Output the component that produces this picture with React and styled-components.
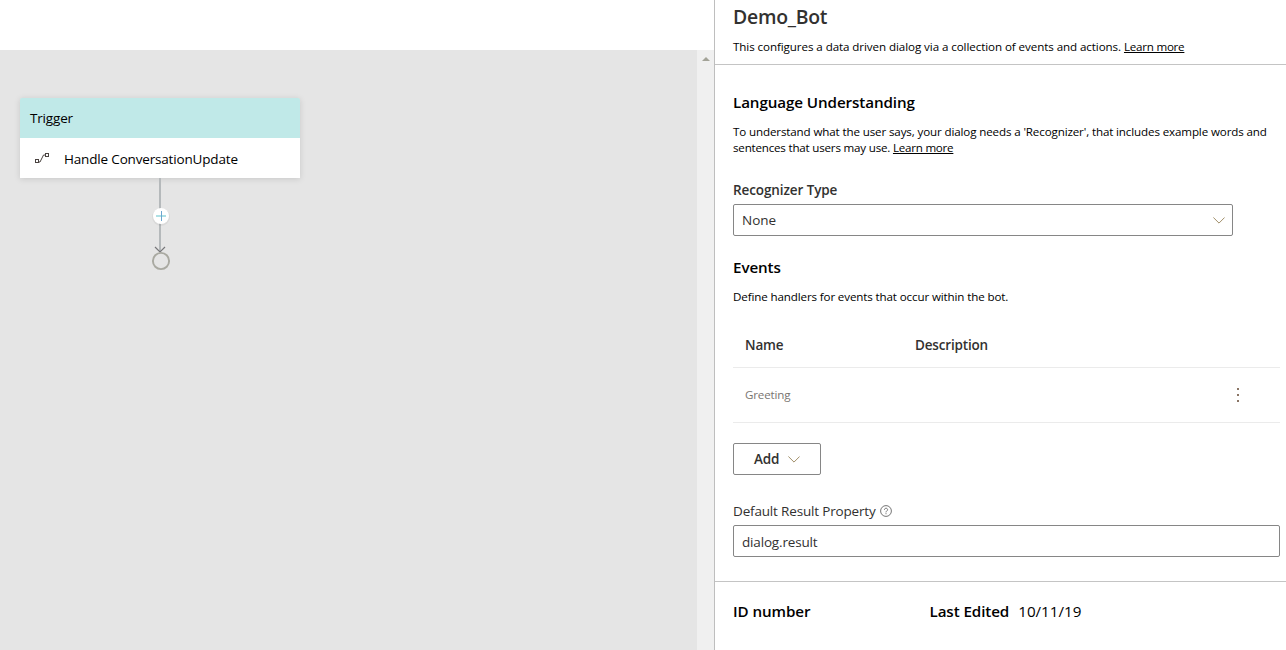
import React from "react";
import styled, { createGlobalStyle } from "styled-components";

const GlobalStyle = createGlobalStyle`
  *, *::before, *::after { box-sizing: border-box; }
  html, body { margin: 0; padding: 0; background: #fff; overflow: hidden; }
  body {
    font-family: "Segoe UI", "Open Sans", "Noto Sans", sans-serif;
    color: #000;
  }
  p, h1, h2 { margin: 0; }
`;

const Page = styled.div`
  display: flex;
  width: 1286px;
  height: 650px;
  overflow: hidden;
`;

const Editor = styled.main`
  display: flex;
  flex: none;
  flex-direction: column;
  width: 714px;
`;

const TopBar = styled.div`
  height: 50px;
  background: #fff;
`;

const CanvasRow = styled.div`
  display: flex;
  flex: 1;
`;

const Canvas = styled.div`
  flex: 1;
  padding: 48px 20px 0;
  background: #e5e5e5;
`;

const ScrollTrack = styled.div`
  display: flex;
  justify-content: center;
  width: 17px;
  padding-top: 7px;
  background: #f0f0f0;
`;

const Flow = styled.div`
  width: 280px;
`;

const TriggerCard = styled.div`
  border-radius: 2px 2px 0 0;
  overflow: hidden;
  box-shadow: 0 1px 6px rgba(0, 0, 0, 0.13);
`;

const CardRow = styled.div`
  display: flex;
  align-items: center;
  height: 40px;
  padding: ${(p) => (p.$head ? "0 10px" : "2px 14px 0")};
  gap: 14px;
  background: ${(p) => (p.$head ? "#c0e9e8" : "#fff")};
`;

const Text = styled.span`
  font-size: ${(p) => p.$size || 13.5}px;
  font-weight: ${(p) => p.$weight || 400};
  line-height: ${(p) => p.$line || 20}px;
  letter-spacing: ${(p) => p.$track || -0.17}px;
  color: ${(p) => p.$color || "#323130"};
  white-space: nowrap;
`;

const Panel = styled.aside`
  display: flex;
  flex-direction: column;
  flex: 1;
  min-width: 0;
  border-left: 1px solid #bebebe;
`;

const PanelHeader = styled.header`
  display: flex;
  flex-direction: column;
  height: 65px;
  padding-left: 18px;
  border-bottom: 1px solid #c4c4c4;
`;

const PanelBody = styled.div`
  display: flex;
  flex-direction: column;
  height: 516px;
  padding: 27px 6px 0 18px;
`;

const PanelFooter = styled.footer`
  display: flex;
  flex: 1;
  padding: 19px 0 0 18px;
  border-top: 1px solid #c4c4c4;
`;

const FooterCell = styled.div`
  display: flex;
  gap: 9px;
  width: 196.5px;
`;

const Title = styled.h1`
  font-size: 19.4px;
  font-weight: 540;
  line-height: 34px;
  letter-spacing: -0.25px;
  color: #323130;
`;

const Heading = styled.h2`
  font-size: 15.2px;
  font-weight: 560;
  line-height: 20px;
  letter-spacing: -0.1px;
  color: #000;
`;

const Copy = styled.p`
  display: flex;
  flex-direction: column;
  margin-top: ${(p) => p.$top}px;
  line-height: 16px;
`;

const CopyLine = styled.span`
  font-size: 11.6px;
  line-height: 16px;
  height: 16px;
  letter-spacing: ${(p) => p.$track || -0.13}px;
  white-space: nowrap;
`;

const Link = styled.a`
  color: #000;
  text-decoration: underline;
  text-underline-offset: 1px;
  letter-spacing: -0.24px;
`;

const Field = styled.div`
  display: flex;
  flex-direction: column;
  gap: 4px;
  margin-top: ${(p) => p.$top}px;
  margin-bottom: ${(p) => p.$bottom || 0}px;
`;

const FieldLabel = styled.div`
  display: flex;
  align-items: center;
  gap: 4px;
  height: 20px;
`;

const Box = styled.div`
  display: flex;
  align-items: center;
  justify-content: space-between;
  width: ${(p) => p.$width || "100%"};
  height: 32px;
  padding: ${(p) => p.$drop || 0}px 7px 0 8px;
  border: 1px solid #868686;
  border-radius: 2px;
`;

const AddButton = styled.button`
  display: flex;
  align-items: center;
  gap: 9px;
  width: 88px;
  height: 32px;
  margin-top: 20px;
  padding: 0 0 0 20px;
  background: #fff;
  border: 1px solid #868686;
  border-radius: 2px;
  font-family: inherit;
`;

const TableRow = styled.div`
  display: grid;
  grid-template-columns: 170px 1fr 48px;
  align-items: center;
  height: ${(p) => p.$height}px;
  margin-top: ${(p) => p.$top || 0}px;
  padding-left: 12px;
  border-bottom: 1px solid #ebebeb;
`;

const MoreDots = styled.div`
  display: flex;
  flex-direction: column;
  gap: 4px;
  padding-left: 5px;
`;

const Dot = styled.i`
  width: 2px;
  height: 2px;
  background: #8a7565;
`;

const Chevron = () => (
  <svg width="12" height="7" viewBox="0 0 12 7" fill="none" stroke="#a08e68" strokeWidth="1">
    <path d="M0.4 0.5L6 6.1L11.6 0.5" />
  </svg>
);

const FlowIcon = () => (
  <svg width="16" height="12" viewBox="0 0 16 12" fill="none" stroke="#4a4340" strokeWidth="1">
    <rect x="1.5" y="6.5" width="3" height="3" />
    <rect x="11.5" y="0.5" width="3" height="3" />
    <path d="M4.5 9H6L9.5 2H11.5" />
  </svg>
);

const HelpIcon = () => (
  <svg width="12" height="12" viewBox="0 0 12 12" fill="none" stroke="#666" strokeWidth="0.9">
    <circle cx="6" cy="6" r="5.4" />
    <path d="M4.4 4.8C4.4 2.7 7.6 2.7 7.6 4.7C7.6 5.8 6 6 6 7.4" />
    <path d="M6 8.2V9.2" />
  </svg>
);

const Connector = () => (
  <svg width="280" height="100" viewBox="0 0 280 100" fill="none">
    <path d="M140 0V73" stroke="#b5b9bb" strokeWidth="2" />
    <circle cx="141" cy="39" r="9" fill="#000" opacity="0.05" />
    <circle cx="141" cy="38" r="8" fill="#fff" />
    <path d="M136 38H146" stroke="#aee0e4" strokeWidth="2" />
    <path d="M141.5 33V43" stroke="#6ca6cf" strokeWidth="1" />
    <path d="M135 69L140 74L145 69" stroke="#77777a" strokeWidth="1.2" />
    <circle cx="141" cy="83" r="8.1" stroke="#a9a9a1" strokeWidth="1.9" />
  </svg>
);

const ScrollArrow = () => (
  <svg width="8" height="4" viewBox="0 0 8 4">
    <path d="M0 4L4 0L8 4Z" fill="#a3a398" />
  </svg>
);

export default function App() {
  return (
    <Page>
      <GlobalStyle />
      <Editor>
        <TopBar />
        <CanvasRow>
          <Canvas>
            <Flow>
              <TriggerCard>
                <CardRow $head>
                  <Text $color="#000">Trigger</Text>
                </CardRow>
                <CardRow>
                  <FlowIcon />
                  <Text $color="#000">Handle ConversationUpdate</Text>
                </CardRow>
              </TriggerCard>
              <Connector />
            </Flow>
          </Canvas>
          <ScrollTrack>
            <ScrollArrow />
          </ScrollTrack>
        </CanvasRow>
      </Editor>
      <Panel>
        <PanelHeader>
          <Title>Demo_Bot</Title>
          <Copy $top={5}>
            <CopyLine $track={-0.08}>
              This configures a data driven dialog via a collection of events and actions. <Link>Learn more</Link>
            </CopyLine>
          </Copy>
        </PanelHeader>
        <PanelBody>
          <Heading>Language Understanding</Heading>
          <Copy $top={12}>
            <CopyLine>
              To understand what the user says, your dialog needs a 'Recognizer', that includes example words and
            </CopyLine>
            <CopyLine $track={-0.2}>
              sentences that users may use. <Link>Learn more</Link>
            </CopyLine>
          </Copy>
          <Field $top={24} $bottom={21}>
            <FieldLabel>
              <Text $weight={560} $track={-0.1}>Recognizer Type</Text>
            </FieldLabel>
            <Box $width="500px">
              <Text $track={-0.01}>None</Text>
              <Chevron />
            </Box>
          </Field>
          <Heading>Events</Heading>
          <Copy $top={12}>
            <CopyLine>Define handlers for events that occur within the bot.</CopyLine>
          </Copy>
          <TableRow $top={18} $height={45}>
            <Text $weight={560}>Name</Text>
            <Text $weight={560}>Description</Text>
          </TableRow>
          <TableRow $height={55}>
            <Text $size={11.6} $line={22} $color="#797571">Greeting</Text>
            <span />
            <MoreDots>
              <Dot />
              <Dot />
              <Dot />
            </MoreDots>
          </TableRow>
          <AddButton>
            <Text $weight={560}>Add</Text>
            <Chevron />
          </AddButton>
          <Field $top={26}>
            <FieldLabel>
              <Text>Default Result Property</Text>
              <HelpIcon />
            </FieldLabel>
            <Box $drop={2}>
              <Text>dialog.result</Text>
            </Box>
          </Field>
        </PanelBody>
        <PanelFooter>
          <FooterCell>
            <Heading>ID number</Heading>
          </FooterCell>
          <FooterCell>
            <Heading>Last Edited</Heading>
            <Text $size={15.2} $track={-0.01} $color="#000">10/11/19</Text>
          </FooterCell>
        </PanelFooter>
      </Panel>
    </Page>
  );
}
